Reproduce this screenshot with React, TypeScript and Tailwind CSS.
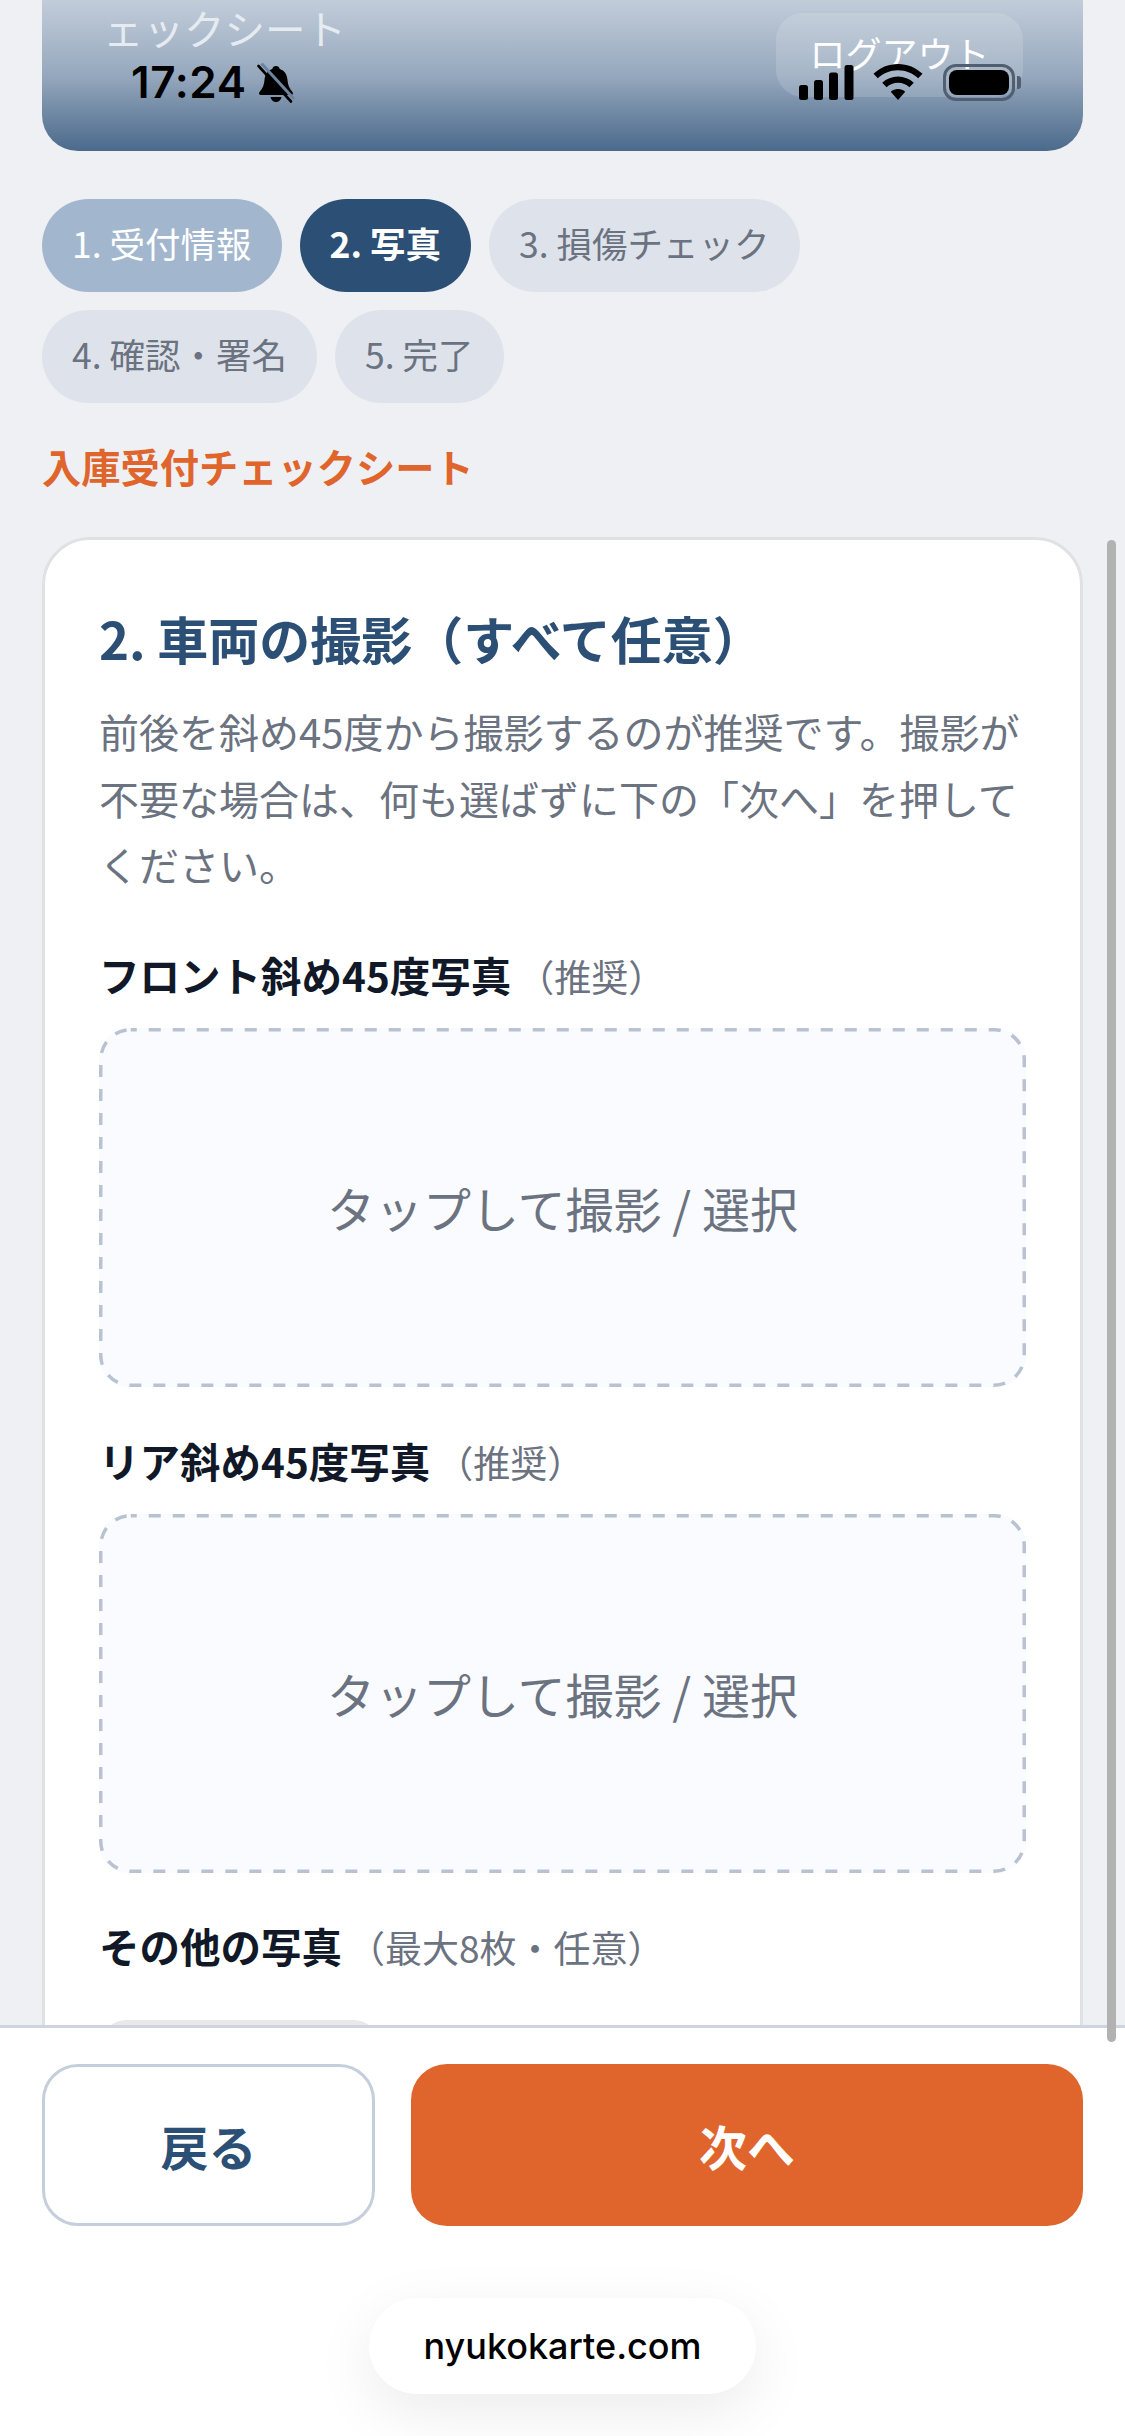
import React from 'react';

const pastStep = 'bg-[#a2b6cd] text-white font-normal';
const activeStep = 'bg-[#2c4f75] text-white font-bold';
const nextStep = 'bg-[#dee3eb] text-[#6b7280] font-normal';

const steps = [
  { label: '1. 受付情報', cls: pastStep },
  { label: '2. 写真', cls: activeStep },
  { label: '3. 損傷チェック', cls: nextStep },
  { label: '4. 確認・署名', cls: nextStep },
  { label: '5. 完了', cls: nextStep },
];

const StatusBar: React.FC = () => (
  <div className="absolute left-0 top-0 w-full h-[120px]">
    <span className="absolute left-[131px] top-[56px] font-['Inter',sans-serif] font-semibold text-[44px] leading-[52px] text-black tracking-[0.6px]">
      17:24
    </span>
    <svg className="absolute left-[257px] top-[63px]" width="38" height="40" viewBox="0 0 38 40">
      <path d="M19 3c2 0 3.400 1.300 3.700 3 5 1.400 7.300 5.500 7.800 11 .4 5 1.800 8.500 5 12 1 1.200.4 3-1.500 3H4c-1.900 0-2.500-1.800-1.500-3 3.200-3.500 4.600-7 5-12 .5-5.500 2.800-9.600 7.800-11 .3-1.700 1.700-3 3.700-3z" fill="#000" />
      <path d="M13.500 34h11c-.4 2.700-2.700 5-5.500 5s-5.100-2.300-5.500-5z" fill="#000" />
      <path d="M4.500 .5 37 36" stroke="#6d83a0" strokeWidth="3" />
      <path d="M1.500 3 34 38.500" stroke="#000" strokeWidth="2.600" strokeLinecap="round" />
    </svg>
    <svg className="absolute left-[798px] top-[64px]" width="58" height="36" viewBox="0 0 58 36">
      <rect x="1" y="21" width="9" height="15" rx="2.500" fill="#000" />
      <rect x="16" y="16" width="9" height="20" rx="2.500" fill="#000" />
      <rect x="31" y="8.500" width="9" height="27.500" rx="2.500" fill="#000" />
      <rect x="46.500" y="1" width="9" height="35" rx="2.500" fill="#000" />
    </svg>
    <svg className="absolute left-[872px] top-[63px]" width="52" height="38" viewBox="0 0 52 38">
      <path d="M26 1c9.500 0 18 3.700 24.500 9.800l-4.300 4.500C41 10.400 33.900 7.300 26 7.300S11 10.400 5.800 15.300L1.500 10.800C8 4.700 16.500 1 26 1z" fill="#000" />
      <path d="M26 13.500c6 0 11.500 2.300 15.800 6.200l-4.400 4.500C34.300 21.500 30.400 19.800 26 19.800s-8.300 1.700-11.400 4.400l-4.400-4.500c4.300-3.900 9.800-6.200 15.800-6.200z" fill="#000" />
      <path d="M26 26c2.800 0 5.300 1 7.200 2.700L26 37l-7.200-8.300C20.700 27 23.200 26 26 26z" fill="#000" />
    </svg>
    <div className="absolute left-[943px] top-[64px] w-[72px] h-[37px] rounded-[13px] border-[3px] border-[#525f70] p-[3px]">
      <div className="w-full h-full rounded-[8px] bg-black" />
    </div>
    <div className="absolute left-[1017px] top-[76px] w-[4px] h-[13px] rounded-r-[3px] bg-[#525f70]" />
  </div>
);

const PhotoField: React.FC<{ label: string; note: string }> = ({ label, note }) => (
  <div className="mt-[45px]">
    <p className="h-[62px] text-[40.5px] leading-[57px] font-bold text-[#111827]">
      {label}
      <span className="ml-[6px] text-[37px] font-normal text-[#6b7280]">{note}</span>
    </p>
    <div className="relative mt-[20px] h-[359px] flex items-center justify-center rounded-[30px] bg-[#f9fbff] text-[48px] text-[#6b7280]">
      <svg className="absolute inset-0" width="927" height="359" viewBox="0 0 927 359" fill="none">
        <rect x="1.750" y="1.750" width="923.500" height="355.500" rx="30" stroke="#b9c2d1" strokeWidth="3.500" strokeDasharray="12 12" strokeDashoffset="6" />
      </svg>
      タップして撮影 / 選択
    </div>
  </div>
);

const App: React.FC = () => {
  return (
    <div className="relative w-[1125px] h-[2436px] overflow-hidden flex flex-col bg-[#eff0f4] font-['Noto_Sans_CJK_JP','Noto_Sans',sans-serif]">
      <header className="relative mx-[42px] h-[151px] shrink-0 rounded-b-[36px] bg-gradient-to-b from-[#c2cdda] via-[#96a8bd] to-[#4b6a8b]">
        <div className="flex justify-between">
          <span className="ml-[61px] mt-[1px] text-[40.5px] leading-[54px] text-[#e6ebf1]">ェックシート</span>
          <button className="mr-[60px] mt-[13px] w-[247px] h-[84px] pb-[6px] rounded-[27px] bg-white/15 text-[36px] text-white">
            ログアウト
          </button>
        </div>
      </header>
      <StatusBar />

      <main className="flex-1 min-h-0 overflow-hidden px-[42px] pt-[48px]">
        <div className="flex flex-wrap gap-[18px]">
          {steps.map((step) => (
            <span key={step.label} className={`h-[93px] px-[30px] pb-[5px] flex items-center rounded-full text-[35.5px] ${step.cls}`}>
              {step.label}
            </span>
          ))}
        </div>
        <h2 className="mt-[34px] h-[62px] text-[39.25px] leading-[57px] font-bold text-[#df652c]">入庫受付チェックシート</h2>
        <section className="mt-[38px] rounded-[48px] border-[3px] border-[#e0e1e4] bg-white px-[54px] pt-[57px]">
          <h1 className="text-[51px] leading-[82px] font-bold text-[#2c4f75]">2. 車両の撮影（すべて任意）</h1>
          <p className="mt-[19px] pb-[3px] text-[40px] leading-[66.5px] text-[#6b7280]">
            前後を斜め45度から撮影するのが推奨です。撮影が不要な場合は、何も選ばずに下の「次へ」を押してください。
          </p>
          <PhotoField label="フロント斜め45度写真" note="（推奨）" />
          <PhotoField label="リア斜め45度写真" note="（推奨）" />
          <div className="mt-[44px]">
            <p className="h-[62px] text-[40.5px] leading-[57px] font-bold text-[#111827]">
              その他の写真
              <span className="ml-[6px] text-[37px] font-normal text-[#6b7280]">（最大8枚・任意）</span>
            </p>
            <div className="mt-[41px] ml-[3px] w-[276px] h-[90px] rounded-[24px] bg-[#e9e9e9]" />
          </div>
        </section>
      </main>

      <footer className="shrink-0 h-[411px] border-t-[3px] border-[#d0d4e2] bg-white px-[42px] pt-[36px] flex flex-col">
        <div className="flex gap-[36px]">
          <button className="w-[333px] h-[162px] rounded-[36px] border-[3px] border-[#c5cfdc] bg-white text-[48px] font-bold text-[#2c4f75]">
            戻る
          </button>
          <button className="flex-1 h-[162px] rounded-[36px] bg-[#df652c] text-[48px] font-bold text-white">
            次へ
          </button>
        </div>
        <div className="mt-[72px] self-center w-[387px] h-[96px] flex items-center justify-center rounded-full bg-white shadow-[0_18px_60px_rgba(0,0,0,0.08)] font-['Inter',sans-serif] font-medium text-[36px] text-black">
          nyukokarte.com
        </div>
      </footer>

      <div className="absolute left-[1107px] top-[540px] w-[9px] h-[1502px] rounded-full bg-[#b2b2b2]" />
    </div>
  );
};

export default App;
